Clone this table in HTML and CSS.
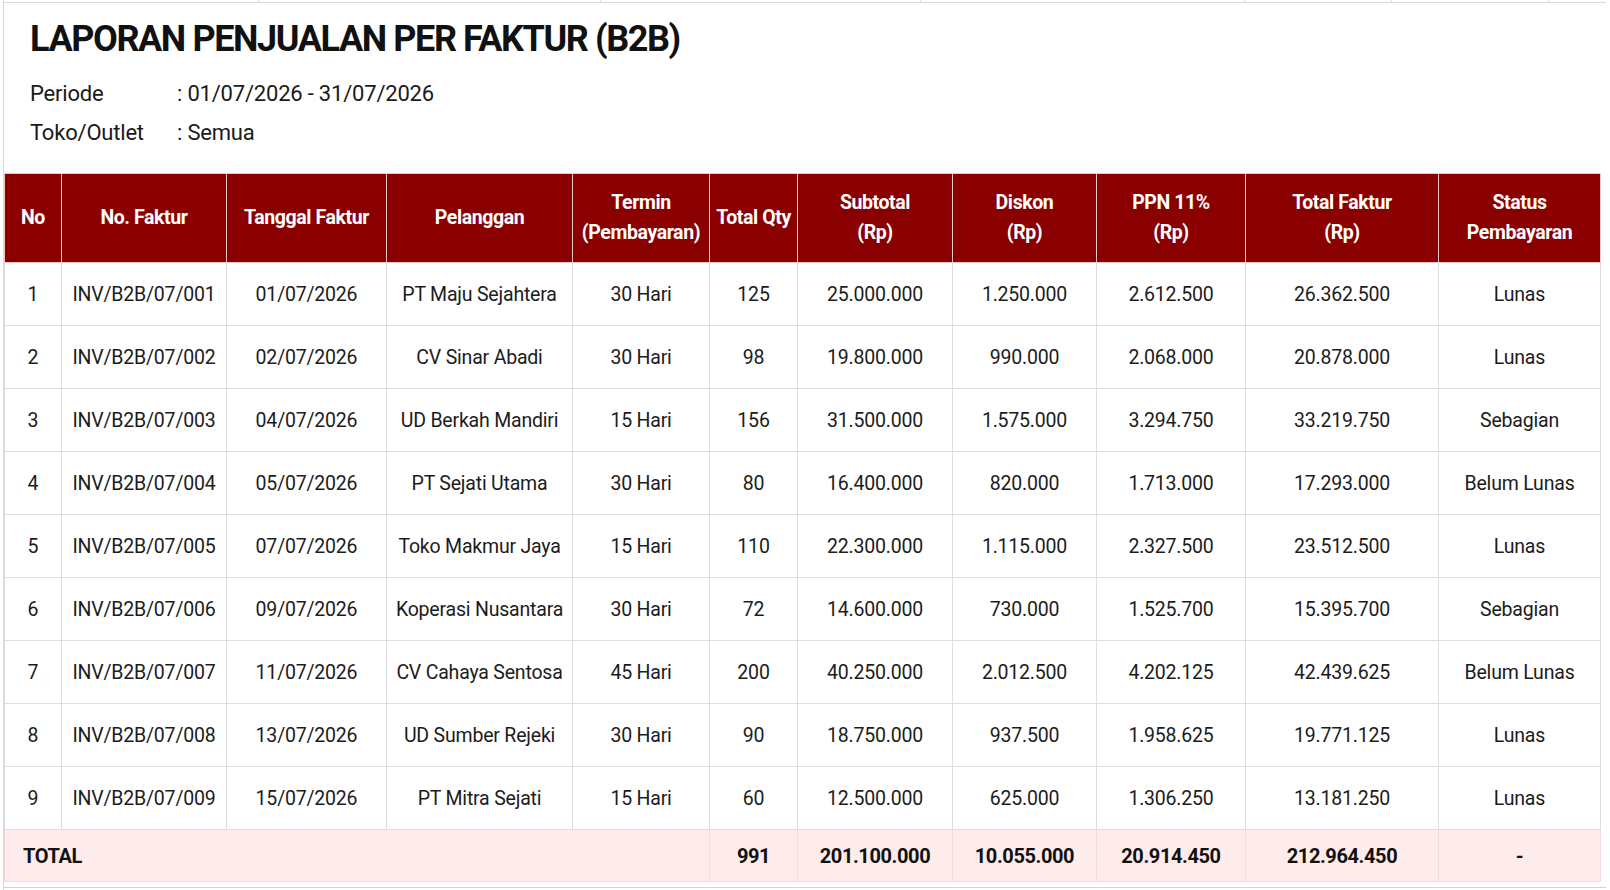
FILE: index.html
```html
<!DOCTYPE html>
<html lang="id">
<head>
<meta charset="utf-8">
<title>Laporan Penjualan Per Faktur (B2B)</title>
<link rel="stylesheet" href="styles.css">
</head>
<body>
<div class="sheet">
  <div class="gridtop"><span></span><span></span><span></span><span></span><span></span><span></span><span></span></div>
  <header class="report-head">
    <h1 class="title">LAPORAN PENJUALAN PER FAKTUR (B2B)</h1>
    <dl class="meta">
      <dt>Periode</dt><dd>: 01/07/2026 - 31/07/2026</dd>
      <dt>Toko/Outlet</dt><dd>: Semua</dd>
    </dl>
  </header>
  <table class="report">
    <colgroup>
      <col class="c-no"><col class="c-faktur"><col class="c-tgl"><col class="c-pel"><col class="c-termin"><col class="c-qty"><col class="c-sub"><col class="c-disk"><col class="c-ppn"><col class="c-total"><col class="c-status">
    </colgroup>
    <thead>
      <tr>
        <th>No</th>
        <th>No. Faktur</th>
        <th>Tanggal Faktur</th>
        <th>Pelanggan</th>
        <th>Termin<br>(Pembayaran)</th>
        <th>Total Qty</th>
        <th>Subtotal<br>(Rp)</th>
        <th>Diskon<br>(Rp)</th>
        <th>PPN 11%<br>(Rp)</th>
        <th>Total Faktur<br>(Rp)</th>
        <th>Status<br>Pembayaran</th>
      </tr>
    </thead>
    <tbody>
      <tr><td>1</td><td>INV/B2B/07/001</td><td>01/07/2026</td><td>PT Maju Sejahtera</td><td>30 Hari</td><td>125</td><td>25.000.000</td><td>1.250.000</td><td>2.612.500</td><td>26.362.500</td><td>Lunas</td></tr>
      <tr><td>2</td><td>INV/B2B/07/002</td><td>02/07/2026</td><td>CV Sinar Abadi</td><td>30 Hari</td><td>98</td><td>19.800.000</td><td>990.000</td><td>2.068.000</td><td>20.878.000</td><td>Lunas</td></tr>
      <tr><td>3</td><td>INV/B2B/07/003</td><td>04/07/2026</td><td>UD Berkah Mandiri</td><td>15 Hari</td><td>156</td><td>31.500.000</td><td>1.575.000</td><td>3.294.750</td><td>33.219.750</td><td>Sebagian</td></tr>
      <tr><td>4</td><td>INV/B2B/07/004</td><td>05/07/2026</td><td>PT Sejati Utama</td><td>30 Hari</td><td>80</td><td>16.400.000</td><td>820.000</td><td>1.713.000</td><td>17.293.000</td><td>Belum Lunas</td></tr>
      <tr><td>5</td><td>INV/B2B/07/005</td><td>07/07/2026</td><td>Toko Makmur Jaya</td><td>15 Hari</td><td>110</td><td>22.300.000</td><td>1.115.000</td><td>2.327.500</td><td>23.512.500</td><td>Lunas</td></tr>
      <tr><td>6</td><td>INV/B2B/07/006</td><td>09/07/2026</td><td>Koperasi Nusantara</td><td>30 Hari</td><td>72</td><td>14.600.000</td><td>730.000</td><td>1.525.700</td><td>15.395.700</td><td>Sebagian</td></tr>
      <tr><td>7</td><td>INV/B2B/07/007</td><td>11/07/2026</td><td>CV Cahaya Sentosa</td><td>45 Hari</td><td>200</td><td>40.250.000</td><td>2.012.500</td><td>4.202.125</td><td>42.439.625</td><td>Belum Lunas</td></tr>
      <tr><td>8</td><td>INV/B2B/07/008</td><td>13/07/2026</td><td>UD Sumber Rejeki</td><td>30 Hari</td><td>90</td><td>18.750.000</td><td>937.500</td><td>1.958.625</td><td>19.771.125</td><td>Lunas</td></tr>
      <tr><td>9</td><td>INV/B2B/07/009</td><td>15/07/2026</td><td>PT Mitra Sejati</td><td>15 Hari</td><td>60</td><td>12.500.000</td><td>625.000</td><td>1.306.250</td><td>13.181.250</td><td>Lunas</td></tr>
    </tbody>
    <tfoot>
      <tr><td class="total-label" colspan="5">TOTAL</td><td>991</td><td>201.100.000</td><td>10.055.000</td><td>20.914.450</td><td>212.964.450</td><td>-</td></tr>
    </tfoot>
  </table>
  <div class="gridbottom"></div>
</div>
</body>
</html>
```

FILE: styles.css
```css
html, body {
  margin: 0;
  padding: 0;
  background: #ffffff;
}

body {
  font-family: Roboto, "Liberation Sans", Arial, sans-serif;
  color: #1c1c1c;
  width: 1610px;
  height: 890px;
  overflow: hidden;
}

.sheet {
  margin-left: 3px;
  border-left: 1px solid #d6d6d6;
  width: 1602px;
}

.gridtop {
  height: 2px;
  border-bottom: 1px solid #dadada;
  display: grid;
  grid-template-columns: 255px 342px 320px 324px 147px 157px 1fr;
}

.gridtop span {
  border-right: 1px solid #dadada;
}

.gridtop span:last-child {
  border-right: 0;
}

.report-head {
  padding: 14px 0 0 26px;
}

.title {
  margin: 0;
  font-size: 36px;
  line-height: 44px;
  font-weight: 700;
  letter-spacing: -1.4px;
  color: #111111;
}

.meta {
  margin: 13px 0 0;
  display: grid;
  grid-template-columns: 147px auto;
  font-size: 22px;
  line-height: 39px;
  letter-spacing: -0.2px;
  color: #1a1a1a;
}

.meta dt,
.meta dd {
  margin: 0;
}

.report {
  margin-top: 21px;
  border-collapse: collapse;
  table-layout: fixed;
  width: 1596px;
}

.c-no { width: 57px; }
.c-faktur { width: 165px; }
.c-tgl { width: 160px; }
.c-pel { width: 186px; }
.c-termin { width: 137px; }
.c-qty { width: 88px; }
.c-sub { width: 155px; }
.c-disk { width: 144px; }
.c-ppn { width: 149px; }
.c-total { width: 193px; }
.c-status { width: 162px; }

.report th {
  height: 88px;
  padding: 0 2px;
  background: #8a0000;
  color: #ffffff;
  font-size: 19.5px;
  line-height: 30px;
  font-weight: 700;
  letter-spacing: -0.4px;
  text-align: center;
  border: 1px solid #ecc9c9;
  white-space: nowrap;
}

.report td {
  height: 62px;
  padding: 0 4px;
  border: 1px solid #dedede;
  text-align: center;
  font-size: 19.5px;
  letter-spacing: -0.2px;
  color: #1c1c1c;
  white-space: nowrap;
}

.report tfoot td {
  height: 51px;
  background: #fdeceb;
  font-weight: 700;
  font-size: 20px;
  letter-spacing: -0.4px;
  color: #111111;
  border-color: #f0dada;
}

.report tfoot .total-label {
  text-align: left;
  padding-left: 18px;
}

.gridbottom {
  margin-top: 5px;
  border-top: 1px solid #d2d2d2;
  height: 4px;
}
```
